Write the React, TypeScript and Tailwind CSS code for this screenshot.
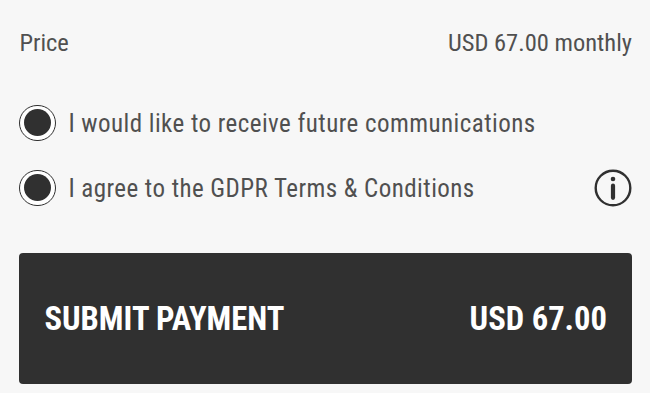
const options = [
  { id: "communications", label: "I would like to receive future communications", info: false },
  { id: "gdpr", label: "I agree to the GDPR Terms & Conditions", info: true },
];

const InfoIcon = () => (
  <svg className="w-[38px] h-[38px]" viewBox="0 0 38 38" fill="none">
    <circle cx="19" cy="19" r="17.3" stroke="#303030" strokeWidth="2.4" />
    <circle cx="19" cy="10" r="2.3" fill="#303030" />
    <path d="M19 16.7V28.8" stroke="#303030" strokeWidth="4.2" strokeLinecap="round" />
  </svg>
);

const Radio = () => (
  <span className="flex items-center justify-center w-[37px] h-9 rounded-full border border-[#303030] bg-white shrink-0">
    <span className="w-[27px] h-[27px] rounded-full bg-[#303030]" />
  </span>
);

const App = () => {
  return (
    <div className="h-[400px] bg-white">
      <div className="w-[650px] h-[393px] bg-[#f7f7f7] text-[#505050] font-['Roboto_Condensed',Roboto,sans-serif] font-stretch-condensed text-[25px] leading-8 whitespace-nowrap pl-[19.4px] pr-[18px] pt-[27px]">
        <div className="flex items-center justify-between text-[24.5px]">
          <span>Price</span>
          <span>USD 67.00 monthly</span>
        </div>
        <div className="flex flex-col mt-[31px]">
          {options.map((o) => (
            <div key={o.id} className="flex items-center h-[65px]">
              <Radio />
              <span className="ml-3 mt-0.5 tracking-[0.45px]">{o.label}</span>
              {o.info && (
                <span className="ml-auto">
                  <InfoIcon />
                </span>
              )}
            </div>
          ))}
        </div>
        <button className="flex items-center justify-between w-full h-[131px] mt-[33px] px-[25px] rounded bg-[#303030] text-white text-[32.6px] font-bold">
          <span>SUBMIT PAYMENT</span>
          <span>USD 67.00</span>
        </button>
      </div>
    </div>
  );
};

export default App;
